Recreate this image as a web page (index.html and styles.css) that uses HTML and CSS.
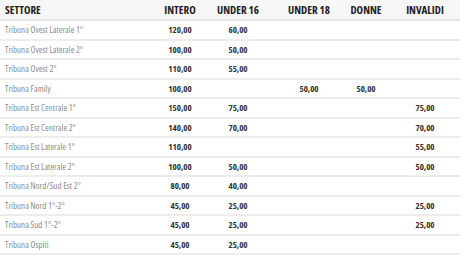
FILE: index.html
```html
<!DOCTYPE html>
<html>
<head>
<meta charset="utf-8">
<link rel="stylesheet" href="styles.css">
</head>
<body>
<div class="table">
  <div class="row head">
    <div class="c first">SETTORE</div><div class="c">INTERO</div><div class="c">UNDER 16</div><div class="c">UNDER 18</div><div class="c">DONNE</div><div class="c">INVALIDI</div>
  </div>
  <div class="row"><div class="c first">Tribuna Ovest Laterale 1°</div><div class="c">120,00</div><div class="c">60,00</div><div class="c"></div><div class="c"></div><div class="c"></div></div>
  <div class="row"><div class="c first">Tribuna Ovest Laterale 2°</div><div class="c">100,00</div><div class="c">50,00</div><div class="c"></div><div class="c"></div><div class="c"></div></div>
  <div class="row"><div class="c first">Tribuna Ovest 2°</div><div class="c">110,00</div><div class="c">55,00</div><div class="c"></div><div class="c"></div><div class="c"></div></div>
  <div class="row"><div class="c first">Tribuna Family</div><div class="c">100,00</div><div class="c"></div><div class="c">50,00</div><div class="c">50,00</div><div class="c"></div></div>
  <div class="row"><div class="c first">Tribuna Est Centrale 1°</div><div class="c">150,00</div><div class="c">75,00</div><div class="c"></div><div class="c"></div><div class="c">75,00</div></div>
  <div class="row"><div class="c first">Tribuna Est Centrale 2°</div><div class="c">140,00</div><div class="c">70,00</div><div class="c"></div><div class="c"></div><div class="c">70,00</div></div>
  <div class="row"><div class="c first">Tribuna Est Laterale 1°</div><div class="c">110,00</div><div class="c"></div><div class="c"></div><div class="c"></div><div class="c">55,00</div></div>
  <div class="row"><div class="c first">Tribuna Est Laterale 2°</div><div class="c">100,00</div><div class="c">50,00</div><div class="c"></div><div class="c"></div><div class="c">50,00</div></div>
  <div class="row"><div class="c first">Tribuna Nord/Sud Est 2°</div><div class="c">80,00</div><div class="c">40,00</div><div class="c"></div><div class="c"></div><div class="c"></div></div>
  <div class="row"><div class="c first">Tribuna Nord 1°-2°</div><div class="c">45,00</div><div class="c">25,00</div><div class="c"></div><div class="c"></div><div class="c">25,00</div></div>
  <div class="row"><div class="c first">Tribuna Sud 1°-2°</div><div class="c">45,00</div><div class="c">25,00</div><div class="c"></div><div class="c"></div><div class="c">25,00</div></div>
  <div class="row"><div class="c first">Tribuna Ospiti</div><div class="c">45,00</div><div class="c">25,00</div><div class="c"></div><div class="c"></div><div class="c"></div></div>
</div>
</body>
</html>
```
FILE: styles.css
```css
html, body {
  margin: 0;
  padding: 0;
  background: #fff;
}
body {
  font-family: "Open Sans", "DejaVu Sans", sans-serif;
  font-stretch: condensed;
}
.table {
  width: 460px;
}
.row {
  display: grid;
  grid-template-columns: 160px 40px 76px 66px 48px 70px;
  height: 19.5px;
  align-items: center;
  border-bottom: 2px solid #ededed;
  box-sizing: border-box;
}
.row.head {
  height: 21px;
  background: #f7f7f7;
  border-bottom: 2px solid #e6e6e6;
}
.c {
  text-align: center;
  font-size: 9px;
  font-weight: 700;
  color: #333;
  white-space: nowrap;
}
.c.first {
  text-align: left;
  padding-left: 5px;
  font-weight: 400;
  color: #8c8c8c;
}
.head .c {
  font-size: 11px;
  font-weight: 700;
  color: #222;
}
.head .c.first {
  color: #222;
  font-weight: 700;
}
```
